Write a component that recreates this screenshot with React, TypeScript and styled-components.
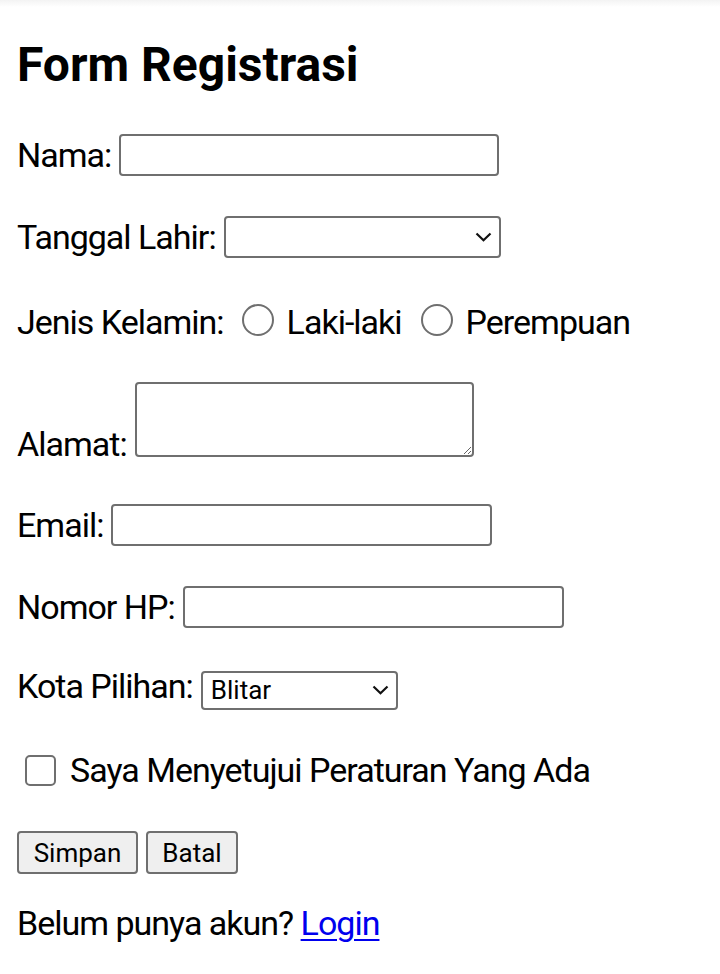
import React from 'react';
import styled, { createGlobalStyle } from 'styled-components';

const GlobalStyle = createGlobalStyle`
  html, body {
    margin: 0;
    padding: 0;
    background: #ffffff;
  }
  body {
    font-family: Roboto, "Noto Sans", sans-serif;
    color: #000000;
  }
`;

const TopShade = styled.div`
  height: 7px;
  background: linear-gradient(#f3f3f3, #ffffff);
`;

const Page = styled.form`
  display: flex;
  flex-direction: column;
  padding: 28px 0 0 17px;
`;

const Title = styled.h2`
  margin: 0 0 39px 0;
  font-size: 48px;
  line-height: 60px;
  font-weight: 700;
`;

const Row = styled.div<{ $gap: number; $align?: string }>`
  display: flex;
  align-items: ${(p) => p.$align ?? 'center'};
  gap: 8px;
  margin-bottom: ${(p) => p.$gap}px;
`;

const Label = styled.label<{ $lh?: number; $shift?: number }>`
  font-size: 34px;
  letter-spacing: -1px;
  line-height: ${(p) => p.$lh ?? 42}px;
  white-space: nowrap;
  position: relative;
  top: ${(p) => p.$shift ?? 0}px;
`;

const TextInput = styled.input<{ $w: number }>`
  box-sizing: border-box;
  width: ${(p) => p.$w}px;
  height: 42px;
  margin: 0;
  border: 2px solid #6f6f6f;
  border-radius: 4px;
  background: #fff;
  padding: 0 8px;
  font-family: Roboto, sans-serif;
  font-size: 26px;
  outline: none;
`;

const TextArea = styled.textarea`
  box-sizing: border-box;
  width: 339px;
  height: 75px;
  border: 2px solid #6f6f6f;
  border-radius: 4px;
  resize: both;
  margin: 0;
  outline: none;
`;

const SelectWrap = styled.div`
  position: relative;
  display: inline-flex;
`;

const Select = styled.select<{ $w: number; $h: number }>`
  appearance: none;
  -webkit-appearance: none;
  box-sizing: border-box;
  width: ${(p) => p.$w}px;
  height: ${(p) => p.$h}px;
  margin: 0;
  border: 2px solid #6f6f6f;
  border-radius: 4px;
  background: #fff;
  padding: 0 8px;
  font-family: Roboto, sans-serif;
  font-size: 26px;
  color: #000;
  outline: none;
`;

const Chevron = styled.svg`
  position: absolute;
  right: 9px;
  top: 50%;
  transform: translateY(-50%);
  pointer-events: none;
`;

const RadioGroup = styled.div`
  display: flex;
  align-items: center;
  gap: 13px;
  margin-left: 10px;
`;

const Radio = styled.input`
  appearance: none;
  -webkit-appearance: none;
  box-sizing: border-box;
  width: 32px;
  height: 32px;
  margin: 0;
  border: 2px solid #6f6f6f;
  border-radius: 50%;
  background: #fff;
`;

const Option = styled.span`
  font-size: 34px;
  letter-spacing: -1px;
  line-height: 42px;
  white-space: nowrap;
  margin-right: 6px;
  position: relative;
  top: 2px;
`;

const Checkbox = styled.input`
  appearance: none;
  -webkit-appearance: none;
  box-sizing: border-box;
  width: 31px;
  height: 31px;
  margin: 0 6px 0 8px;
  border: 2px solid #6f6f6f;
  border-radius: 5px;
  background: #fff;
`;

const Button = styled.button<{ $w: number }>`
  box-sizing: border-box;
  width: ${(p) => p.$w}px;
  height: 43px;
  margin: 0;
  border: 2px solid #6f6f6f;
  border-radius: 4px;
  background: #efefef;
  font-family: Roboto, sans-serif;
  font-size: 26px;
  color: #000;
  padding: 0;
`;

const Footer = styled.p`
  margin: 0;
  font-size: 34px;
  letter-spacing: -1px;
  line-height: 42px;
  white-space: nowrap;
`;

const Link = styled.a`
  color: #0000ee;
  text-decoration: underline;
  text-underline-offset: 4px;
  text-decoration-thickness: 2px;
`;

const ChevronIcon = () => (
  <Chevron width="17" height="10" viewBox="0 0 17 10">
    <path d="M1.5 1.5 L8.5 8.2 L15.5 1.5" fill="none" stroke="#111" strokeWidth="2.2" />
  </Chevron>
);

export default function App() {
  return (
    <>
      <GlobalStyle />
      <TopShade />
      <Page onSubmit={(e) => e.preventDefault()}>
        <Title>Form Registrasi</Title>

        <Row $gap={40}>
          <Label>Nama:</Label>
          <TextInput $w={380} />
        </Row>

        <Row $gap={41}>
          <Label>Tanggal Lahir:</Label>
          <SelectWrap>
            <Select $w={277} $h={42}>
              <option></option>
            </Select>
            <ChevronIcon />
          </SelectWrap>
        </Row>

        <Row $gap={41}>
          <Label $shift={2}>Jenis Kelamin:</Label>
          <RadioGroup>
            <Radio type="radio" name="jk" />
            <Option>Laki-laki</Option>
            <Radio type="radio" name="jk" />
            <Option>Perempuan</Option>
          </RadioGroup>
        </Row>

        <Row $gap={47} $align="flex-end">
          <Label $lh={25}>Alamat:</Label>
          <TextArea />
        </Row>

        <Row $gap={40}>
          <Label>Email:</Label>
          <TextInput $w={381} />
        </Row>

        <Row $gap={41}>
          <Label>Nomor HP:</Label>
          <TextInput $w={381} />
        </Row>

        <Row $gap={38}>
          <Label $shift={-4}>Kota Pilihan:</Label>
          <SelectWrap>
            <Select $w={197} $h={39} defaultValue="Blitar">
              <option>Blitar</option>
              <option>Malang</option>
              <option>Surabaya</option>
            </Select>
            <ChevronIcon />
          </SelectWrap>
        </Row>

        <Row $gap={40}>
          <Checkbox type="checkbox" />
          <Label>Saya Menyetujui Peraturan Yang Ada</Label>
        </Row>

        <Row $gap={28}>
          <Button type="submit" $w={121}>Simpan</Button>
          <Button type="button" $w={92}>Batal</Button>
        </Row>

        <Footer>
          Belum punya akun? <Link href="#">Login</Link>
        </Footer>
      </Page>
    </>
  );
}
